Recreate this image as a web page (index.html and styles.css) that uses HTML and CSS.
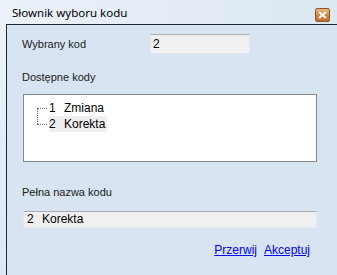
FILE: index.html
```html
<!DOCTYPE html>
<html>
<head>
	<title>Słownik wyboru kodu</title>
	<meta charset="utf-8">
	<link rel="stylesheet" href="styles.css">
</head>
<body>
	<div class="window">
		<div class="titlebar">
			<span class="title">Słownik wyboru kodu</span>
			<span class="close">
				<svg width="9" height="8" viewBox="0 0 9 8"><path d="M1 1L8 7M8 1L1 7" stroke="#fff" stroke-width="2"/></svg>
			</span>
		</div>
		<div class="client">
			<div class="row">
				<span class="label">Wybrany kod</span>
				<div class="field code-field">2</div>
			</div>
			<span class="label section">Dostępne kody</span>
			<div class="tree">
				<div class="node first"><span class="num">1</span>Zmiana</div>
				<div class="node last"><span class="sel"><span class="num">2</span>Korekta</span></div>
			</div>
			<span class="label section full-label">Pełna nazwa kodu</span>
			<div class="field name-field"><span class="num">2</span>Korekta</div>
			<div class="actions">
				<a href="#">Przerwij</a>
				<a href="#">Akceptuj</a>
			</div>
		</div>
	</div>
</body>
</html>
```

FILE: styles.css
```css
html, body {
	margin: 0;
	padding: 0;
	background: #D8E4F2;
	font-family: "Liberation Sans", Arial, sans-serif;
	font-size: 11px;
	color: #1b1b1b;
}

.window {
	width: 337px;
	height: 275px;
	background: linear-gradient(#EDF3FA, #DCE7F3);
	padding-left: 6px;
	box-sizing: border-box;
	display: flex;
	flex-direction: column;
}

.titlebar {
	height: 24px;
	display: flex;
	align-items: center;
	margin-left: -6px;
	padding-left: 12px;
	background: linear-gradient(90deg, #EAF1F9 0%, #E3ECF6 60%, #DCE7F2 100%);
}

.title {
	font-family: "Noto Sans", "Open Sans", sans-serif;
	font-size: 11.5px;
	color: #000;
	flex: 1;
	padding-top: 1px;
}

.close {
	width: 15px;
	height: 14px;
	margin-right: 7px;
	margin-top: 6px;
	box-sizing: border-box;
	border: 1px solid #8A5A32;
	border-radius: 2px;
	background: linear-gradient(#EDB57E, #D5893F 50%, #C4712A);
	display: flex;
	align-items: center;
	justify-content: center;
}

.client {
	flex: 1;
	margin-right: -6px;
	background: #D8E4F2;
	border-left: 1px solid #1E2835;
	border-top: 1px solid #1E2835;
	padding: 9px 0 0 15px;
	display: flex;
	flex-direction: column;
	align-items: flex-start;
}

.row {
	display: flex;
	align-items: center;
	height: 20px;
}

.label {
	line-height: 13px;
	width: 128px;
}

.field {
	background: #F0F0F0;
	border: 1px solid #E3E9EF;
	border-top-color: #ABADB3;
	box-sizing: border-box;
	font-size: 12px;
	color: #000;
}

.code-field {
	width: 100px;
	height: 20px;
	line-height: 18px;
	padding-left: 2px;
}

.section {
	margin-top: 17px;
}

.tree {
	margin-top: 10px;
	margin-left: 1px;
	width: 294px;
	height: 68px;
	box-sizing: border-box;
	background: #fff;
	border: 1px solid #828790;
	padding: 5px 0 0 25px;
	color: #000;
	font-size: 12px;
}

.node {
	height: 16px;
	line-height: 16px;
	position: relative;
}

.node::before {
	content: "";
	position: absolute;
	left: -12px;
	top: 8px;
	width: 10px;
	border-top: 1px dotted #777;
}

.first::after {
	content: "";
	position: absolute;
	left: -12px;
	top: 8px;
	height: 16px;
	border-left: 1px dotted #777;
}

.sel {
	display: inline-block;
	background: #EFEFEF;
	padding-right: 2px;
}

.num {
	display: inline-block;
	width: 15px;
}

.full-label {
	margin-top: 24px;
}

.name-field {
	margin-top: 12px;
	margin-left: 1px;
	width: 294px;
	height: 17px;
	line-height: 15px;
	padding-left: 3px;
}

.actions {
	align-self: stretch;
	display: flex;
	justify-content: flex-end;
	gap: 7px;
	margin-top: 15px;
	padding-right: 33px;
	font-size: 12px;
}

.actions a {
	color: #0000FF;
}
```
